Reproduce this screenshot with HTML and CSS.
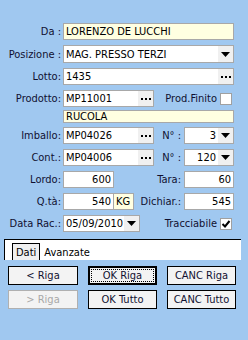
FILE: index.html
```html
<!DOCTYPE html>
<html lang="it">

<head>
    <meta charset="UTF-8">
    <meta name="viewport" content="width=device-width, initial-scale=1.0">
    <title>Movimento</title>
    <link rel="stylesheet" href="styles.css">
</head>

<body>
    <div class="form">
        <div class="row">
            <span class="lbl">Da :</span>
            <div class="field wide yellow"><span class="val">LORENZO DE LUCCHI</span></div>
        </div>
        <div class="row tall">
            <span class="lbl">Posizione :</span>
            <div class="field wide">
                <span class="val">MAG. PRESSO TERZI</span>
                <span class="btn"><svg width="9" height="5" viewBox="0 0 9 5"><polygon points="0,0 9,0 4.5,5" fill="#000"/></svg></span>
            </div>
        </div>
        <div class="row">
            <span class="lbl">Lotto:</span>
            <div class="field wide">
                <span class="val">1435</span>
                <span class="btn"><svg width="10" height="2" viewBox="0 0 10 2"><rect x="0" width="2" height="2"/><rect x="4" width="2" height="2"/><rect x="8" width="2" height="2"/></svg></span>
            </div>
        </div>
        <div class="row">
            <span class="lbl">Prodotto:</span>
            <div class="field mid">
                <span class="val">MP11001</span>
                <span class="btn"><svg width="10" height="2" viewBox="0 0 10 2"><rect x="0" width="2" height="2"/><rect x="4" width="2" height="2"/><rect x="8" width="2" height="2"/></svg></span>
            </div>
            <span class="lbl-right">Prod.Finito</span>
            <span class="check"></span>
        </div>
        <div class="row short">
            <span class="lbl"></span>
            <div class="field wide yellow"><span class="val">RUCOLA</span></div>
        </div>
        <div class="row">
            <span class="lbl">Imballo:</span>
            <div class="field mid">
                <span class="val">MP04026</span>
                <span class="btn"><svg width="10" height="2" viewBox="0 0 10 2"><rect x="0" width="2" height="2"/><rect x="4" width="2" height="2"/><rect x="8" width="2" height="2"/></svg></span>
            </div>
            <span class="lbl-right">N° :</span>
            <div class="field small-r">
                <span class="val num">3</span>
                <span class="btn"><svg width="9" height="5" viewBox="0 0 9 5"><polygon points="0,0 9,0 4.5,5" fill="#000"/></svg></span>
            </div>
        </div>
        <div class="row">
            <span class="lbl">Cont.:</span>
            <div class="field mid">
                <span class="val">MP04006</span>
                <span class="btn"><svg width="10" height="2" viewBox="0 0 10 2"><rect x="0" width="2" height="2"/><rect x="4" width="2" height="2"/><rect x="8" width="2" height="2"/></svg></span>
            </div>
            <span class="lbl-right">N° :</span>
            <div class="field small-r">
                <span class="val num">120</span>
                <span class="btn"><svg width="9" height="5" viewBox="0 0 9 5"><polygon points="0,0 9,0 4.5,5" fill="#000"/></svg></span>
            </div>
        </div>
        <div class="row">
            <span class="lbl">Lordo:</span>
            <div class="field small"><span class="val num">600</span></div>
            <span class="lbl-right">Tara:</span>
            <div class="field small-r"><span class="val num">60</span></div>
        </div>
        <div class="row">
            <span class="lbl">Q.tà:</span>
            <div class="field small"><span class="val num">540</span></div>
            <div class="field unit yellow"><span class="val">KG</span></div>
            <span class="lbl-right">Dichiar.:</span>
            <div class="field small-r"><span class="val num">545</span></div>
        </div>
        <div class="row">
            <span class="lbl">Data Rac.:</span>
            <div class="field date">
                <span class="val">05/09/2010</span>
                <span class="btn"><svg width="9" height="5" viewBox="0 0 9 5"><polygon points="0,0 9,0 4.5,5" fill="#000"/></svg></span>
            </div>
            <span class="lbl-right">Tracciabile</span>
            <span class="check checked"><svg width="10" height="10" viewBox="0 0 10 10"><polyline points="1.5,5 4,7.5 8.5,2" fill="none" stroke="#000" stroke-width="2"/></svg></span>
        </div>
    </div>

    <div class="tabs">
        <span class="tab active">Dati</span>
        <span class="tab">Avanzate</span>
    </div>

    <div class="buttons">
        <button>&lt; Riga</button>
        <button class="default"><span class="focus">OK Riga</span></button>
        <button>CANC Riga</button>
        <button disabled>&gt; Riga</button>
        <button>OK Tutto</button>
        <button>CANC Tutto</button>
    </div>
</body>

</html>
```

FILE: styles.css
```css
body {
    margin: 0;
    padding: 0;
    width: 248px;
    height: 340px;
    background-color: #a0c8f0;
    font-family: "DejaVu Sans Condensed", "DejaVu Sans", sans-serif;
    font-size: 11px;
    color: #101030;
    overflow: hidden;
}

.form {
    display: flex;
    flex-direction: column;
    gap: 5px;
    padding-top: 23px;
    width: 234px;
}

.row {
    display: flex;
    align-items: center;
    height: 17px;
}

.row.tall {
    height: 18px;
}

.row.short {
    height: 13px;
    margin-top: -2px;
    margin-bottom: -1px;
}

.lbl {
    width: 61px;
    margin-right: 2px;
    text-align: right;
    white-space: nowrap;
    flex-shrink: 0;
}

.lbl-right {
    flex: 1;
    text-align: right;
    padding-right: 3px;
    white-space: nowrap;
}

.field {
    display: flex;
    align-items: stretch;
    height: 100%;
    box-sizing: border-box;
    border: 1px solid #a8a8a8;
    background-color: #ffffff;
    color: #000000;
    flex-shrink: 0;
}

.field.yellow {
    background-color: #ffffe1;
}

.field .val {
    flex: 1;
    display: flex;
    align-items: center;
    padding: 0 2px;
    white-space: nowrap;
    overflow: hidden;
}

.field .val.num {
    justify-content: flex-end;
}

.field .btn {
    width: 15px;
    display: flex;
    align-items: center;
    justify-content: center;
    background-color: #f0f0f0;
}

.wide {
    width: 171px;
}

.mid {
    width: 91px;
}

.small {
    width: 51px;
}

.small-r {
    width: 50px;
}

.unit {
    width: 21px;
    margin-left: -1px;
}

.date {
    width: 77px;
}

.check {
    width: 12px;
    height: 12px;
    box-sizing: border-box;
    border: 1px solid #a0a0a0;
    background-color: #ffffff;
    margin-right: 2px;
    display: flex;
    align-items: center;
    justify-content: center;
    flex-shrink: 0;
}

.tabs {
    display: flex;
    align-items: flex-end;
    margin: 7px 0 0 4px;
    width: 237px;
    height: 21px;
    box-sizing: border-box;
    background-color: #ffffff;
    border-top: 1px solid #000000;
    border-left: 1px solid #000000;
    padding-left: 7px;
}

.tab {
    display: flex;
    align-items: center;
    height: 16px;
    padding: 0 4px;
    color: #000000;
}

.tab.active {
    border: 1px solid #000000;
    border-bottom: none;
    background-color: #f0f0f0;
    padding: 0 3px;
}

.buttons {
    display: grid;
    grid-template-columns: 70px 69px 69px;
    column-gap: 10px;
    row-gap: 5px;
    margin-top: 6px;
    padding-left: 8px;
}

.buttons button {
    height: 19px;
    padding: 0;
    font-family: inherit;
    font-size: 11px;
    color: #101030;
    background-color: #f3f3f3;
    border: 1px solid #000000;
    border-radius: 0;
}

.buttons button:disabled {
    color: #a8a8a8;
    border-color: #b0b0b0;
}

.buttons button.default {
    border: 2px solid #000000;
    padding: 1px;
}

.buttons .focus {
    display: flex;
    align-items: center;
    justify-content: center;
    height: 100%;
    box-sizing: border-box;
    border: 1px dotted #000000;
}
```
